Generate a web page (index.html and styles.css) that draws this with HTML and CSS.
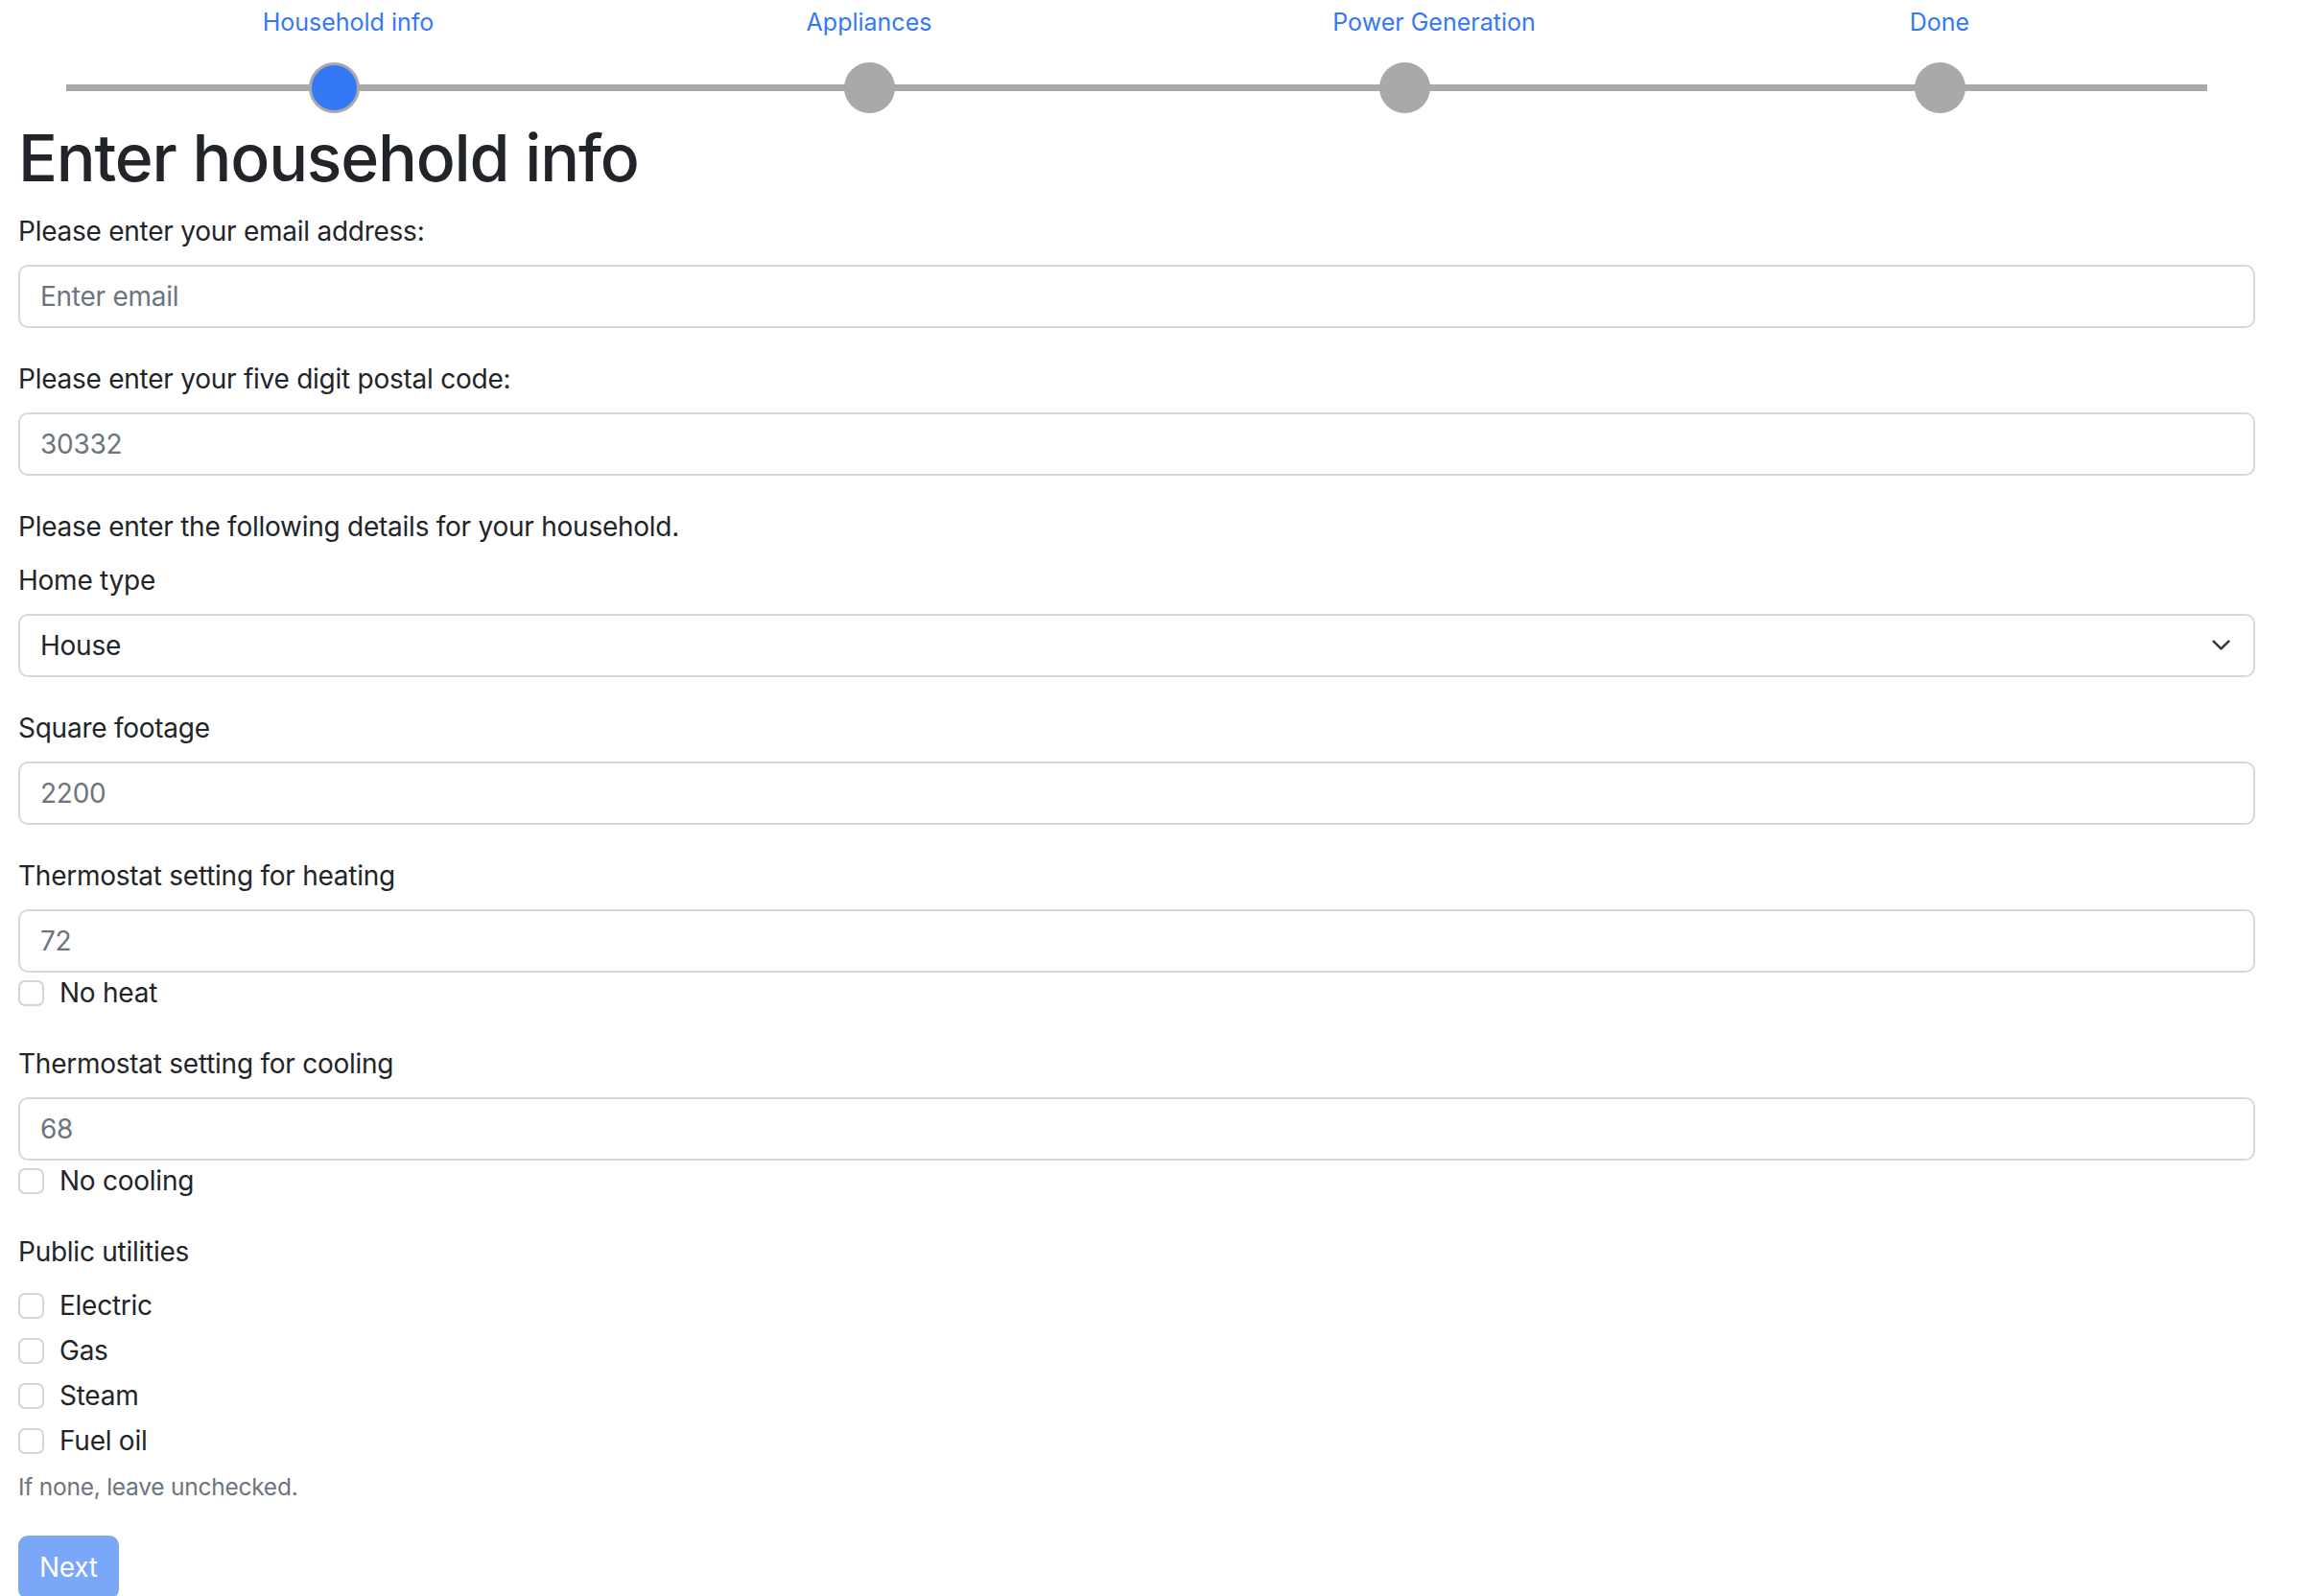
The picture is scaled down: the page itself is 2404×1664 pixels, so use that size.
FILE: index.html
```html
<!DOCTYPE html>
<html lang="en">
<head>
<meta charset="utf-8">
<title>Enter household info</title>
<link rel="stylesheet" href="styles.css">
</head>
<body>
<main class="page">
  <div class="stepper">
    <div class="step-labels">
      <span class="step-label shift-a">Household info</span>
      <span class="step-label">Appliances</span>
      <span class="step-label shift-b">Power Generation</span>
      <span class="step-label">Done</span>
    </div>
    <div class="track">
      <span class="dot dot-active"></span>
      <span class="dot"></span>
      <span class="dot"></span>
      <span class="dot"></span>
    </div>
  </div>

  <h1 class="title">Enter household info</h1>

  <form class="form">
    <div class="field">
      <label class="form-label" for="email">Please enter your email address:</label>
      <input class="form-control" id="email" type="email" placeholder="Enter email">
    </div>
    <div class="field">
      <label class="form-label" for="zip">Please enter your five digit postal code:</label>
      <input class="form-control" id="zip" type="text" placeholder="30332">
    </div>

    <p class="intro">Please enter the following details for your household.</p>

    <div class="field">
      <label class="form-label" for="hometype">Home type</label>
      <div class="select-wrap">
        <select class="form-select" id="hometype">
          <option>House</option>
          <option>Apartment</option>
          <option>Townhome</option>
          <option>Condominium</option>
          <option>Mobile home</option>
        </select>
        <svg class="chevron" viewBox="0 0 16 16" width="21" height="21" aria-hidden="true"><path d="M2 5l6 6 6-6" fill="none" stroke="#343a40" stroke-width="2" stroke-linecap="round" stroke-linejoin="round"/></svg>
      </div>
    </div>
    <div class="field">
      <label class="form-label" for="sqft">Square footage</label>
      <input class="form-control" id="sqft" type="number" placeholder="2200">
    </div>
    <div class="field">
      <label class="form-label" for="heat">Thermostat setting for heating</label>
      <input class="form-control" id="heat" type="number" placeholder="72">
      <div class="form-check">
        <input class="check" type="checkbox" id="noheat">
        <label for="noheat">No heat</label>
      </div>
    </div>
    <div class="field">
      <label class="form-label" for="cool">Thermostat setting for cooling</label>
      <input class="form-control" id="cool" type="number" placeholder="68">
      <div class="form-check">
        <input class="check" type="checkbox" id="nocool">
        <label for="nocool">No cooling</label>
      </div>
    </div>
    <div class="field">
      <div class="form-label">Public utilities</div>
      <div class="form-check stacked">
        <input class="check" type="checkbox" id="u-electric">
        <label for="u-electric">Electric</label>
      </div>
      <div class="form-check stacked">
        <input class="check" type="checkbox" id="u-gas">
        <label for="u-gas">Gas</label>
      </div>
      <div class="form-check stacked">
        <input class="check" type="checkbox" id="u-steam">
        <label for="u-steam">Steam</label>
      </div>
      <div class="form-check stacked">
        <input class="check" type="checkbox" id="u-oil">
        <label for="u-oil">Fuel oil</label>
      </div>
      <div class="form-text">If none, leave unchecked.</div>
    </div>
    <button class="btn-next" type="button" disabled>Next</button>
  </form>
</main>
</body>
</html>
```

FILE: styles.css
```css
* {
  box-sizing: border-box;
}

html, body {
  margin: 0;
  padding: 0;
  background: #ffffff;
}

body {
  font-family: Inter, "Liberation Sans", Arial, sans-serif;
  font-size: 28px;
  line-height: 1.5;
  letter-spacing: -0.25px;
  color: #212529;
}

.page {
  padding: 0 53px 0 19px;
}

/* ---------- stepper ---------- */
.stepper {
  margin: 0 50px;
}

.step-labels {
  display: grid;
  grid-template-columns: repeat(4, 1fr);
  height: 46px;
  line-height: 46px;
}

.step-label {
  justify-self: center;
  font-size: 25px;
  letter-spacing: 0;
  color: #3478f6;
  white-space: nowrap;
}

.shift-a {
  transform: translateX(15px);
}

.shift-b {
  transform: translateX(31px);
}

.track {
  display: grid;
  grid-template-columns: repeat(4, 1fr);
  justify-items: center;
  align-items: center;
  height: 53px;
  margin-top: 19px;
  background: linear-gradient(#a9a9a9, #a9a9a9) center / 100% 7px no-repeat;
}

.dot {
  width: 53px;
  height: 53px;
  border-radius: 50%;
  background: #a9a9a9;
}

.dot-active {
  background: #3478f6;
  border: 3px solid #a9a9a9;
}

/* ---------- heading ---------- */
.title {
  margin: 4px 0 14px;
  font-size: 68px;
  line-height: 84px;
  font-weight: 500;
  letter-spacing: -1.2px;
  color: #212529;
}

/* ---------- form ---------- */
.form {
  margin: 0;
}

.field {
  margin-bottom: 32px;
}

.form-label {
  display: block;
  margin-bottom: 14px;
  line-height: 42px;
}

.intro {
  margin: 0 0 14px;
  line-height: 42px;
}

.form-control,
.form-select {
  display: block;
  width: 100%;
  height: 66px;
  padding: 10px 21px;
  font-family: inherit;
  font-size: 28px;
  line-height: 42px;
  letter-spacing: -0.25px;
  color: #212529;
  background: #ffffff;
  border: 2px solid #d6d9dc;
  border-radius: 10px;
  outline: none;
  appearance: none;
  -webkit-appearance: none;
  -moz-appearance: textfield;
}

.form-control::placeholder {
  color: #6c757d;
  opacity: 1;
}

.form-control::-webkit-outer-spin-button,
.form-control::-webkit-inner-spin-button {
  -webkit-appearance: none;
  margin: 0;
}

.select-wrap {
  position: relative;
}

.form-select {
  padding-right: 70px;
}

.chevron {
  position: absolute;
  right: 25px;
  top: 22px;
  pointer-events: none;
}

.form-check {
  display: flex;
  align-items: flex-start;
  min-height: 42px;
  line-height: 42px;
}

.form-check.stacked {
  margin-bottom: 5px;
}

.check {
  flex: none;
  width: 27px;
  height: 27px;
  margin: 8px 16px 0 0;
  border: 2px solid #d2d5d9;
  border-radius: 7px;
  background: #ffffff;
  appearance: none;
  -webkit-appearance: none;
}

.form-text {
  margin-top: 9px;
  font-size: 24.5px;
  line-height: 37px;
  color: #6c757d;
}

.btn-next {
  display: block;
  margin-top: 28px;
  height: 66px;
  padding: 10px 20px;
  font-family: inherit;
  font-size: 28px;
  line-height: 42px;
  letter-spacing: -0.25px;
  color: #ffffff;
  background: #7ba7f9;
  border: 2px solid #7ba7f9;
  border-radius: 10px;
}
```
